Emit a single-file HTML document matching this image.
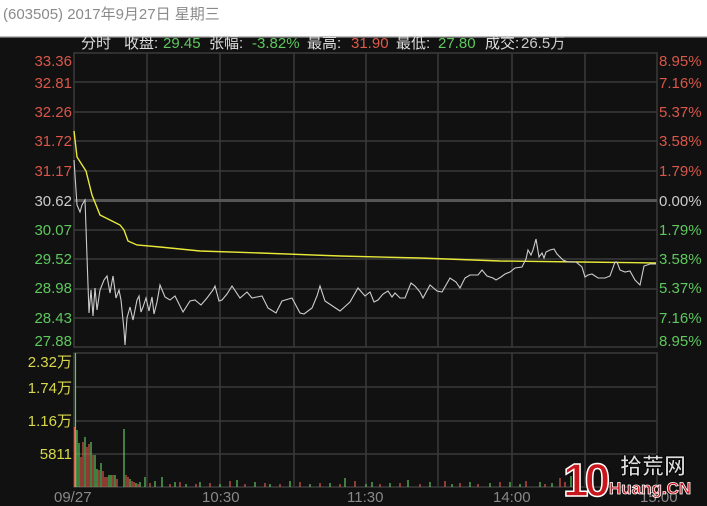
<!DOCTYPE html>
<html><head><meta charset="utf-8"><style>
body{margin:0;width:707px;height:506px;overflow:hidden;background:#fff;font-family:"Liberation Sans","Noto Sans CJK SC",sans-serif}
svg{display:block}
</style></head><body>
<svg width="707" height="506" xmlns="http://www.w3.org/2000/svg" font-family="Liberation Sans, Noto Sans CJK SC, sans-serif">
<rect x="0" y="0" width="707" height="36" fill="#fff"/>
<text x="3" y="19" font-size="15" fill="#8a8a8a">(603505) 2017年9月27日 星期三</text>
<rect x="0" y="36" width="707" height="1.5" fill="#bdbdbd"/>
<rect x="0" y="37.5" width="707" height="469" fill="#111"/>
<g font-size="15">
<text x="81" y="48" fill="#ddd">分时</text>
<text x="124" y="48" fill="#ddd">收盘:</text><text x="163" y="48" fill="#5ec85e">29.45</text>
<text x="209" y="48" fill="#ddd">张幅:</text><text x="252" y="48" fill="#5ec85e">-3.82%</text>
<text x="307" y="48" fill="#ddd">最高:</text><text x="351" y="48" fill="#e05a4a">31.90</text>
<text x="396" y="48" fill="#ddd">最低:</text><text x="438" y="48" fill="#5ec85e">27.80</text>
<text x="485" y="48" fill="#ddd">成交:</text><text x="521" y="48" fill="#ccc">26.5万</text>
</g>
<g stroke="#3a3a3a" stroke-width="1.5" fill="none">
<rect x="74" y="53" width="583" height="294"/>
<path d="M74 82H657M74 112H657M74 141H657M74 171H657M74 230H657M74 259H657M74 289H657M74 318H657"/>
<path d="M147 53V347M220 53V347M294 53V347M366 53V347M438 53V347M512 53V347M585 53V347"/>
<rect x="74" y="353" width="583" height="134"/>
<path d="M74 387H657M74 421H657M74 454H657"/>
<path d="M147 353V487M220 353V487M294 353V487M366 353V487M438 353V487M512 353V487M585 353V487"/>
</g>
<rect x="74" y="199" width="583" height="3" fill="#555"/>
<g font-size="15" text-anchor="end">
<text x="72" y="66" fill="#d9574a">33.36</text>
<text x="72" y="88" fill="#d9574a">32.81</text>
<text x="72" y="117" fill="#d9574a">32.26</text>
<text x="72" y="146" fill="#d9574a">31.72</text>
<text x="72" y="176" fill="#d9574a">31.17</text>
<text x="72" y="206" fill="#ccc">30.62</text>
<text x="72" y="235" fill="#5ec85e">30.07</text>
<text x="72" y="264" fill="#5ec85e">29.52</text>
<text x="72" y="293" fill="#5ec85e">28.98</text>
<text x="72" y="323" fill="#5ec85e">28.43</text>
<text x="72" y="346" fill="#5ec85e">27.88</text>
<text x="72" y="367" fill="#d8d84a">2.32万</text>
<text x="72" y="393" fill="#d8d84a">1.74万</text>
<text x="72" y="426" fill="#d8d84a">1.16万</text>
<text x="72" y="459" fill="#d8d84a">5811</text>
</g>
<g font-size="15">
<text x="659" y="66" fill="#d9574a">8.95%</text>
<text x="659" y="88" fill="#d9574a">7.16%</text>
<text x="659" y="117" fill="#d9574a">5.37%</text>
<text x="659" y="146" fill="#d9574a">3.58%</text>
<text x="659" y="176" fill="#d9574a">1.79%</text>
<text x="659" y="206" fill="#ccc">0.00%</text>
<text x="659" y="235" fill="#5ec85e">1.79%</text>
<text x="659" y="264" fill="#5ec85e">3.58%</text>
<text x="659" y="293" fill="#5ec85e">5.37%</text>
<text x="659" y="323" fill="#5ec85e">7.16%</text>
<text x="659" y="346" fill="#5ec85e">8.95%</text>
</g>
<g font-size="15" fill="#888">
<text x="54" y="502">09/27</text><text x="202" y="502">10:30</text><text x="347" y="502">11:30</text><text x="493" y="502">14:00</text><text x="640" y="502">15:00</text>
</g>
<polyline fill="none" stroke="#e8e83a" stroke-width="1.4" points="74,131 77,157 86,171 92,195 100,215 110,220 120,225 124,230 128,241 137,245 160,247 200,251 260,253 340,256 420,258 500,261 580,262 656,263"/>
<polyline fill="none" stroke="#ccc" stroke-width="1.1" points="74,160 76,190 77,205 80,212 82,205 85,200 86,228 88,285 89,313 91,290 93,316 95,288 97,310 100,290 104,280 107,276 110,293 113,276 116,298 119,290 121,300 124,330 125,345 127,318 130,307 133,320 137,300 139,296 141,312 143,307 146,298 149,311 152,297 154,314 157,302 160,285 165,297 170,300 175,296 183,312 190,301 195,300 201,305 207,298 213,290 215,286 219,301 222,300 227,294 232,286 240,298 247,292 252,298 257,297 262,296 268,308 276,313 282,301 292,298 300,313 304,314 312,308 317,296 320,286 325,301 340,311 350,302 358,288 365,296 370,292 374,302 378,300 383,294 388,291 392,297 395,293 400,298 405,298 411,283 415,286 420,292 423,298 430,285 437,291 442,292 446,285 450,278 456,282 460,288 465,278 470,275 478,275 482,270 487,276 493,278 496,280 501,277 505,274 510,272 515,268 522,267 526,259 528,250 531,255 533,250 536,239 539,257 542,253 544,258 546,252 550,250 554,249 557,254 563,260 568,262 576,262 582,267 585,277 588,275 592,274 598,278 605,278 610,276 615,262 617,262 620,270 625,272 630,271 635,280 640,285 644,266 650,264 656,264"/>
<g stroke-width="1.2">
<path stroke="#e05a4a" d="M74.5 487V427M81 487V457M83 487V442M87 487V447M89 487V444M93 487V455M99 487V470M103 487V471M105 487V477M107 487V477M113 487V475M117 487V479M126 487V475M128 487V477M132 487V481M134 487V482M138 487V484M150 487V483M170 487V484M180 487V482M196 487V484M210 487V483M230 487V481M245 487V484M265 487V483M280 487V484M300 487V482M320 487V483M340 487V484M355 487V481M380 487V484M400 487V483M420 487V484M445 487V481M460 487V483M478 487V484M500 487V482M526 487V481M545 487V484M560 487V478M565 487V482"/>
<path stroke="#5ec85e" d="M75.5 487V353M77 487V430M79 487V443M85 487V437M91 487V442M95 487V455M97 487V469M101 487V463M109 487V475M111 487V475M115 487V475M124 487V429M130 487V479M136 487V483M140 487V482M145 487V477M155 487V481M162 487V477M175 487V482M186 487V484M200 487V482M220 487V484M237 487V480M255 487V482M270 487V484M290 487V481M310 487V484M330 487V483M345 487V478M366 487V484M372 487V482M390 487V483M408 487V480M430 487V482M452 487V484M470 487V482M490 487V483M510 487V482M520 487V484M540 487V482M552 487V483M571 487V476M580 487V482"/>
</g>
<g font-weight="bold">
<text x="563" y="496" font-size="46" fill="#c8161d" stroke="#fff" stroke-width="1.5" letter-spacing="-4">10</text>
<text x="620" y="474" font-size="22" fill="#ddd" stroke="#000" stroke-width="0.8">拾荒网</text>
<text x="609" y="494" font-size="17" fill="#c8161d" stroke="#fff" stroke-width="0.8">Huang.CN</text>
</g>
</svg>
</body></html>
